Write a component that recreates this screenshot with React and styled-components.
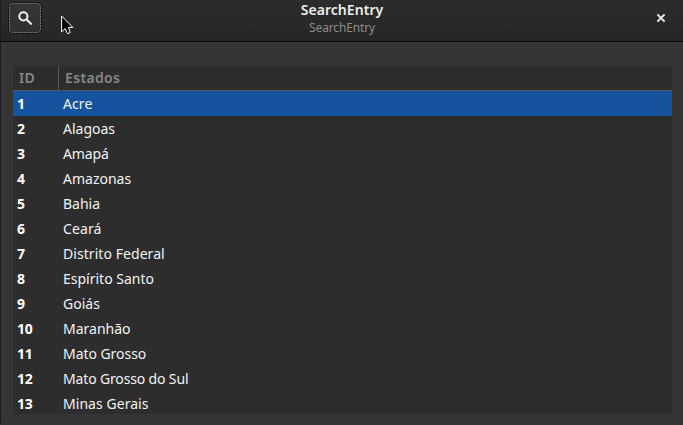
import React from 'react';
import styled, { createGlobalStyle } from 'styled-components';

const GlobalStyle = createGlobalStyle`
  body { margin: 0; background: #353535; overflow: hidden; }
  * { box-sizing: border-box; }
`;

const Window = styled.div`
  position: relative;
  width: 683px;
  height: 425px;
  display: flex;
  flex-direction: column;
  background: #353535;
  border-left: 1px solid #1c1c1c;
  border-bottom: 2px solid #373435;
  font-family: 'Noto Sans', 'Open Sans', sans-serif;
  font-size: 14px;
  color: #f4f4f4;
  overflow: hidden;
`;

const HeaderBar = styled.header`
  flex: none;
  height: 42px;
  display: grid;
  grid-template-columns: 60px 1fr 60px;
  background: linear-gradient(#2c2c2c, #262626);
  border-bottom: 1px solid #070707;
`;

const SearchButton = styled.button`
  width: 34px;
  height: 32px;
  margin: 2px 0 0 7px;
  padding: 2px;
  border: 1px solid #161616;
  border-radius: 5px;
  background: linear-gradient(#353535, #303030);
`;

const FocusRing = styled.svg`
  display: block;
`;

const Titles = styled.div`
  text-align: center;
  white-space: nowrap;
`;

const Title = styled.div`
  height: 20px;
  line-height: 20px;
  font-weight: 600;
  font-size: 14px;
  letter-spacing: 0.05px;
  color: #eeeeec;
`;

const Subtitle = styled.div`
  height: 16px;
  line-height: 16px;
  font-size: 12px;
  letter-spacing: -0.15px;
  color: #8b8b89;
`;

const CloseButton = styled.button`
  width: 24px;
  height: 24px;
  margin: 6px 0 0 26px;
  padding: 0;
  border: 0;
  background: transparent;
  display: grid;
  place-items: center;
`;

const List = styled.div`
  flex: none;
  width: 659px;
  height: 348px;
  margin: 24px 0 0 12px;
  background: #2d2d2d;
  overflow: hidden;
`;

const ListHeader = styled.div`
  height: 25px;
  display: grid;
  grid-template-columns: 46px 1fr;
  line-height: 24px;
  font-weight: 600;
  color: #888886;
  border-bottom: 1px solid #555553;
`;

const HeaderCell = styled.div`
  padding-left: 6px;
  letter-spacing: 0.35px;
  border-right: ${(p) => (p.$divided ? '1px solid #555553' : '0')};
`;

const Row = styled.div`
  height: 25px;
  line-height: 25px;
  display: grid;
  grid-template-columns: 50px 1fr;
  color: #fff;
  background: ${(p) => (p.$selected ? '#15539e' : 'transparent')};
`;

const Id = styled.div`
  padding-left: 4px;
  font-weight: 700;
  letter-spacing: -0.15px;
`;

const Name = styled.div`
  color: #f2f2f2;
  white-space: nowrap;
  letter-spacing: ${(p) => p.$tracking || 0}px;
`;

const Pointer = styled.svg`
  position: absolute;
  left: 60px;
  top: 15px;
`;

const states = [
  { name: 'Acre', tracking: 0.1 },
  { name: 'Alagoas' },
  { name: 'Amapá', tracking: -0.1 },
  { name: 'Amazonas' },
  { name: 'Bahia' },
  { name: 'Ceará', tracking: 0.1 },
  { name: 'Distrito Federal', tracking: 0.06 },
  { name: 'Espírito Santo' },
  { name: 'Goiás' },
  { name: 'Maranhão' },
  { name: 'Mato Grosso', tracking: -0.05 },
  { name: 'Mato Grosso do Sul', tracking: -0.15 },
  { name: 'Minas Gerais', tracking: 0.05 },
];

export default function App() {
  return (
    <>
      <GlobalStyle />
      <Window>
        <HeaderBar>
          <SearchButton aria-label="Search">
            <FocusRing width="28" height="26" viewBox="0 0 28 26" fill="none" overflow="visible">
              <rect x="-1.5" y="-1.5" width="31" height="29" rx="3" stroke="#777775" strokeDasharray="2 1" />
              <circle cx="12.4" cy="11.3" r="4.1" stroke="#eeeeec" strokeWidth="2" />
              <path d="M15.5 14.4 L20 18.8" stroke="#eeeeec" strokeWidth="2.1" strokeLinecap="round" />
            </FocusRing>
          </SearchButton>
          <Titles>
            <Title>SearchEntry</Title>
            <Subtitle>SearchEntry</Subtitle>
          </Titles>
          <CloseButton aria-label="Close">
            <svg width="10" height="10" viewBox="0 0 10 10" fill="none">
              <path d="M1.4 1.4 L8.6 8.6 M8.6 1.4 L1.4 8.6" stroke="#eeeeec" strokeWidth="2" />
            </svg>
          </CloseButton>
        </HeaderBar>
        <List>
          <ListHeader>
            <HeaderCell $divided>ID</HeaderCell>
            <HeaderCell>Estados</HeaderCell>
          </ListHeader>
          {states.map(({ name, tracking }, i) => (
            <Row key={name} $selected={i === 0}>
              <Id>{i + 1}</Id>
              <Name $tracking={tracking}>{name}</Name>
            </Row>
          ))}
        </List>
        <Pointer width="14" height="21" viewBox="0 0 14 21">
          <path
            d="M0.6 1 V17 L4.2 13.7 L6.6 18.6 L9.2 17.6 L7.4 12.4 H11.8 Z"
            fill="#050505"
            stroke="#fff"
            strokeWidth="1"
          />
        </Pointer>
      </Window>
    </>
  );
}
